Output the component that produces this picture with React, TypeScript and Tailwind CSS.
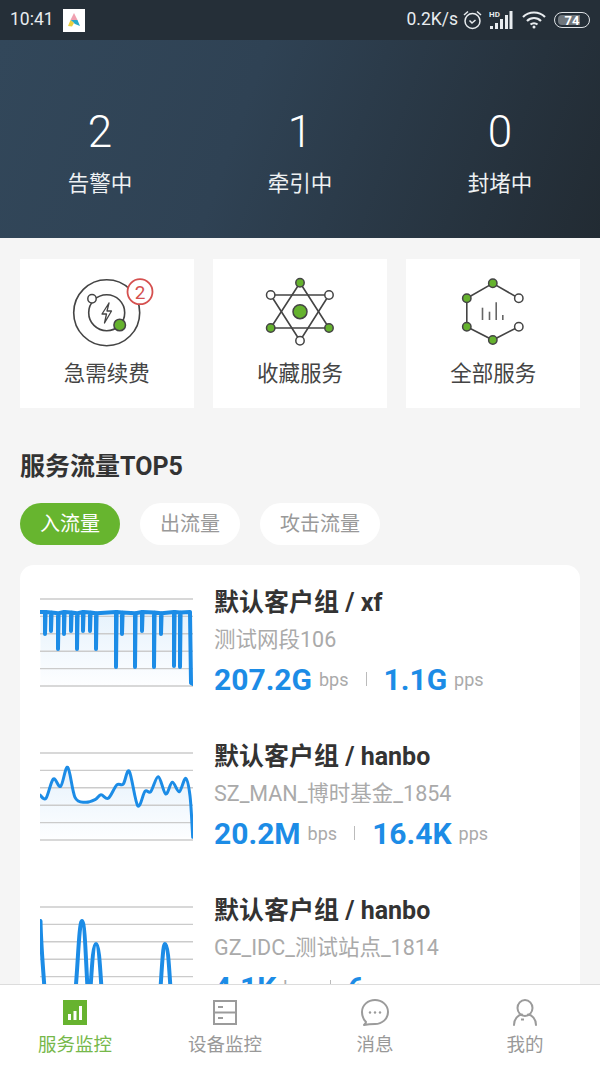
import React from 'react';

const FONT = 'font-[Roboto,"Noto_Sans_CJK_SC",sans-serif]';

type Pt = [number, number];

// catmull-rom through the sampled points of the traffic curve
function smooth(pts: Pt[]) {
  let d = `M${pts[0][0]} ${pts[0][1]}`;
  for (let i = 0; i < pts.length - 1; i++) {
    const p0 = pts[Math.max(i - 1, 0)];
    const p1 = pts[i];
    const p2 = pts[i + 1];
    const p3 = pts[Math.min(i + 2, pts.length - 1)];
    const c1x = p1[0] + (p2[0] - p0[0]) / 6;
    const c1y = p1[1] + (p2[1] - p0[1]) / 6;
    const c2x = p2[0] - (p3[0] - p1[0]) / 6;
    const c2y = p2[1] - (p3[1] - p1[1]) / 6;
    d += ` C${c1x.toFixed(1)} ${c1y.toFixed(1)} ${c2x.toFixed(1)} ${c2y.toFixed(1)} ${p2[0]} ${p2[1]}`;
  }
  return d;
}

const dips: Pt[] = [
  [5, 36], [11, 33], [18, 51], [24, 36], [31, 33], [37, 51], [43, 33], [50, 33], [56, 51], [76, 69],
  [82, 36], [95, 69], [102, 33], [114, 69], [121, 36], [134, 68], [140, 69],
];

function firstLine() {
  let d = 'M0.5 14';
  dips.forEach(([x, y], i) => {
    const top = 14 + (i % 3) * 0.6;
    d += ` L${x} ${top} L${x} ${y} L${x + 0.6} ${top}`;
  });
  return d + ' L150 14 L151 85 L153 86';
}

const secondPts: Pt[] = (
  [
    [60, 198], [78, 208], [100, 150], [122, 172], [143, 115], [165, 205], [195, 220], [225, 212], [243, 197],
    [265, 208], [290, 168], [310, 165], [328, 127], [353, 230], [375, 187], [392, 188], [415, 143], [437, 195],
    [457, 160], [478, 188], [497, 148], [510, 200], [518, 325],
  ] as Pt[]
).map(([x, y]) => [+(x / 3 - 20).toFixed(1), +(y / 3 - 23).toFixed(1)] as Pt);

const thirdLine =
  'M0.5 15 C1 40 3 60 5 90 L35 90 C38 60 39 15 42 15 C45 15 46 60 48 90 L50 90 C52 60 53 38 56 38 C59 38 60 60 62 90 L120 90 C122 60 123 38 125 38 C128 38 129 60 131 90';

const charts = [
  { line: firstLine(), area: firstLine() + ' L153 87 L0.5 87 Z', width: 4 },
  { line: smooth(secondPts), area: smooth(secondPts) + ' L0 87 Z', width: 3 },
  { line: thirdLine, area: '', width: 4 },
];

function Chart({ index }: { index: number }) {
  const c = charts[index];
  return (
    <svg width="153" height="90" viewBox="0 0 153 90" className="shrink-0">
      <defs>
        <linearGradient id={`fade${index}`} x1="0" y1="0" x2="0" y2="1">
          <stop offset="0" stopColor="#e6f2fc" />
          <stop offset="1" stopColor="#fdfeff" />
        </linearGradient>
      </defs>
      {c.area ? <path d={c.area} fill={`url(#fade${index})`} /> : null}
      {[1, 18.4, 35.8, 53.2, 70.6, 88].map((y) => (
        <line key={y} x1="0" x2="153" y1={y} y2={y} stroke="#cbcbcb" strokeWidth="1.4" />
      ))}
      <path d={c.line} fill="none" stroke="#1c8ce6" strokeWidth={c.width} strokeLinejoin="round" strokeLinecap="round" />
    </svg>
  );
}

const rows = [
  { title: '默认客户组 / xf', sub: '测试网段106', a: '207.2G', b: '1.1G' },
  { title: '默认客户组 / hanbo', sub: 'SZ_MAN_博时基金_1854', a: '20.2M', b: '16.4K' },
  { title: '默认客户组 / hanbo', sub: 'GZ_IDC_测试站点_1814', a: '4.1K', b: '6' },
];

function Node({ x, y, on, r }: { x: number; y: number; on?: boolean; r?: number }) {
  return <circle cx={x} cy={y} r={r ?? 4.2} fill={on ? '#65b22e' : '#fff'} stroke="#444" strokeWidth="1.5" />;
}

function RenewIcon() {
  return (
    <svg width="100" height="80" viewBox="-3 0 100 80">
      <g fill="none" stroke="#444" strokeWidth="1.6">
        <circle cx="46.7" cy="42.7" r="33" />
        <circle cx="46.7" cy="42.7" r="18" />
      </g>
      <Node x={32} y={28.7} />
      <Node x={59.7} y={55} r={5.8} on />
      <path d="M49 33 L42 44 L46.5 44 L44.5 53 L51.5 41 L47 41 Z" fill="none" stroke="#444" strokeWidth="1.3" strokeLinejoin="round" />
      <circle cx="80" cy="21.7" r="12.5" fill="#fff" stroke="#d5504f" strokeWidth="1.8" />
      <text x="80" y="28.5" textAnchor="middle" fontSize="19" fill="#d5504f" fontFamily="Roboto">2</text>
    </svg>
  );
}

function FavIcon() {
  return (
    <svg width="100" height="80" viewBox="-5 0 100 80">
      <g fill="none" stroke="#444" strokeWidth="1.6">
        <path d="M45 12.7 L74 58 L15.7 58 Z" />
        <path d="M45 70.7 L15.7 25 L74 25 Z" />
      </g>
      <Node x={45} y={12.7} on />
      <Node x={15.7} y={25} />
      <Node x={74} y={25} />
      <Node x={15.7} y={58} on />
      <Node x={74} y={58} on />
      <Node x={45} y={70.7} />
      <Node x={45} y={41.7} r={7} on />
    </svg>
  );
}

function AllIcon() {
  return (
    <svg width="100" height="80" viewBox="-6.5 0 100 80">
      <path d="M69.3 28.3 L43.3 13.3 L17.3 28.3 L17.3 56.7 L43.3 70 L69.3 56.7" fill="none" stroke="#444" strokeWidth="1.6" />
      <g stroke="#666" strokeWidth="1.6">
        <line x1="33" x2="33" y1="37.7" y2="50" />
        <line x1="40" x2="40" y1="41.7" y2="50" />
        <line x1="46.7" x2="46.7" y1="32.3" y2="50" />
        <line x1="53.3" x2="53.3" y1="45" y2="50" />
      </g>
      <Node x={43.3} y={13.3} on />
      <Node x={17.3} y={28.3} on />
      <Node x={69.3} y={28.3} />
      <Node x={17.3} y={56.7} on />
      <Node x={69.3} y={56.7} />
      <Node x={43.3} y={70} on />
    </svg>
  );
}

function StatusIcons() {
  return (
    <div className="flex items-center text-[#e8ecef]">
      <span className="text-[17.5px] leading-none">0.2K/s</span>
      <svg width="21" height="22" viewBox="0 0 21 22" className="ml-[4px]" fill="none" stroke="currentColor" strokeWidth="1.5">
        <circle cx="10.5" cy="12" r="7.5" />
        <path d="M7.5 11.5 L10 14 L13.5 11" />
        <path d="M2 6 L6 2.5 M19 6 L15 2.5" />
      </svg>
      <svg width="24" height="20" viewBox="0 0 24 20" className="ml-[6px]" fill="currentColor">
        <text x="0" y="7" fontSize="8" fontWeight="700" fontFamily="Roboto">HD</text>
        <rect x="1" y="16" width="3" height="3" />
        <rect x="6" y="13" width="3" height="6" />
        <rect x="11" y="9" width="3" height="10" />
        <rect x="16" y="5" width="3" height="14" />
        <rect x="20.5" y="1" width="3" height="18" />
      </svg>
      <svg width="24" height="20" viewBox="0 0 24 20" className="ml-[9px]" fill="none" stroke="currentColor" strokeWidth="2.2">
        <path d="M1 7 C7 1 17 1 23 7" />
        <path d="M5 11 C9 7 15 7 19 11" />
        <path d="M8.5 14.5 C10.5 12.8 13.5 12.8 15.5 14.5" />
        <circle cx="12" cy="17" r="1.5" fill="currentColor" stroke="none" />
      </svg>
      <div className="relative ml-[8px] flex h-[16px] w-[36px] items-center justify-center rounded-full border border-[#dfe3e6]">
        <div className="absolute left-[3px] top-[2px] h-[10px] w-[22px] rounded-l-[4px] bg-[#6f767c]" />
        <span className="relative text-[13px] font-bold leading-none text-white">74</span>
      </div>
    </div>
  );
}

function NavIcon({ index }: { index: number }) {
  if (index === 0) {
    return (
      <svg width="28" height="30" viewBox="0 0 28 30">
        <rect x="2" y="2" width="24" height="25" fill="#67b32f" />
        <g fill="#fff">
          <rect x="7" y="16" width="3" height="6" />
          <rect x="12.5" y="13" width="3" height="9" />
          <rect x="18" y="8" width="3" height="14" />
        </g>
      </svg>
    );
  }
  if (index === 1) {
    return (
      <svg width="28" height="30" viewBox="0 0 28 30" fill="none" stroke="#9b9b9b" strokeWidth="2">
        <rect x="3" y="3" width="22" height="23" />
        <line x1="3" x2="25" y1="14.5" y2="14.5" />
        <line x1="7" x2="12" y1="9" y2="9" />
        <line x1="7" x2="12" y1="20" y2="20" />
      </svg>
    );
  }
  if (index === 2) {
    return (
      <svg width="28" height="30" viewBox="0 0 28 30" fill="none" stroke="#9b9b9b" strokeWidth="2">
        <path d="M5 24 C2 21 1 18 1 14 C1 7 7 2 14 2 C21 2 27 7 27 14 C27 21 21 26 14 26 C11 26 8 26 3 27 C4 26 5 25 5 24 Z" strokeLinejoin="round" />
        <g fill="#9b9b9b" stroke="none">
          <circle cx="9" cy="14.5" r="1.2" />
          <circle cx="14" cy="14.5" r="1.2" />
          <circle cx="19" cy="14.5" r="1.2" />
        </g>
      </svg>
    );
  }
  return (
    <svg width="28" height="30" viewBox="0 0 28 30" fill="none" stroke="#9b9b9b" strokeWidth="2">
      <ellipse cx="14" cy="10" rx="7.5" ry="8" />
      <path d="M3 27 C3 21 7 17 11 16.5 M25 27 C25 21 21 17 17 16.5" strokeLinecap="round" />
      <line x1="10" x2="13" y1="21.5" y2="21.5" />
    </svg>
  );
}

const nav = ['服务监控', '设备监控', '消息', '我的'];

export default function App() {
  return (
    <div className={`${FONT} flex h-[1067px] w-[600px] flex-col overflow-hidden bg-[#f5f5f5]`}>
      <div className="flex h-[40px] shrink-0 items-center justify-between bg-[#252f38] pl-[10px] pr-[10px] text-[#e8ecef]">
        <div className="flex items-center">
          <span className="text-[17.5px] leading-none">10:41</span>
          <div className="ml-[9px] flex h-[23px] w-[22px] items-center justify-center bg-white">
            <svg width="14" height="16" viewBox="0 0 14 16">
              <path d="M7 1 L10.5 8 L3.5 8 Z" fill="#f0a0b0" />
              <path d="M3.5 8 L10.5 8 L13 14 L8 12 Z" fill="#27a9c9" />
              <path d="M3.5 8 L1 14 L5 14.5 L7 11 Z" fill="#e9cf3e" />
            </svg>
          </div>
        </div>
        <StatusIcons />
      </div>

      <div className="flex h-[198px] shrink-0 bg-[linear-gradient(110deg,#32475a_0%,#2f4254_40%,#222b33_100%)] text-white">
        {[
          ['2', '告警中'],
          ['1', '牵引中'],
          ['0', '封堵中'],
        ].map(([n, label]) => (
          <div key={label} className="flex flex-1 flex-col items-center pt-[64px]">
            <span className="h-[56px] text-[44px] font-light leading-[56px]">{n}</span>
            <span className="mt-[9px] text-[21.5px] leading-[30px] text-[#eef1f3]">{label}</span>
          </div>
        ))}
      </div>

      <div className="relative min-h-0 flex-1 overflow-hidden">
        <div className="grid grid-cols-3 gap-[19.5px] px-[20px] pt-[21px]">
          {[
            { label: '急需续费', icon: <RenewIcon /> },
            { label: '收藏服务', icon: <FavIcon /> },
            { label: '全部服务', icon: <AllIcon /> },
          ].map((card) => (
            <div key={card.label} className="flex h-[149px] flex-col items-center bg-white pt-[11px]">
              {card.icon}
              <span className="mt-[9px] text-[21.5px] leading-[30px] text-[#444]">{card.label}</span>
            </div>
          ))}
        </div>

        <h2 className="mt-[43px] pl-[20px] text-[25px] font-bold leading-[32px] text-[#333]">服务流量TOP5</h2>

        <div className="mt-[20px] flex gap-[20px] pl-[20px]">
          <span className="flex h-[42px] w-[100px] items-center justify-center rounded-full bg-[#67b52f] text-[20px] text-white">入流量</span>
          <span className="flex h-[42px] w-[100px] items-center justify-center rounded-full bg-white text-[20px] text-[#999]">出流量</span>
          <span className="flex h-[42px] w-[120px] items-center justify-center rounded-full bg-white text-[20px] text-[#999]">攻击流量</span>
        </div>

        <div className="mx-[20px] mt-[20px] rounded-t-[14px] bg-white px-[20px] pt-[20px]">
          {rows.map((row, i) => (
            <div key={i} className="flex h-[154px] gap-[21px]">
              <div className="mt-[13px]">
                <Chart index={i} />
              </div>
              <div className="min-w-0">
                <div className="h-[37px] whitespace-nowrap text-[25px] font-bold leading-[36px] text-[#333]">{row.title}</div>
                <div className="h-[35px] whitespace-nowrap text-[21.5px] leading-[35px] text-[#aaa]">{row.sub}</div>
                <div className="flex h-[44px] items-center whitespace-nowrap">
                  <span className="text-[30px] font-bold text-[#1c8ce6]">{row.a}</span>
                  <span className="ml-[7px] text-[18px] text-[#aaa]">bps</span>
                  <span className="mx-[17px] h-[14px] w-[1px] bg-[#bbb]" />
                  <span className="text-[30px] font-bold text-[#1c8ce6]">{row.b}</span>
                  <span className="ml-[7px] text-[18px] text-[#aaa]">pps</span>
                </div>
              </div>
            </div>
          ))}
        </div>
      </div>

      <div className="flex h-[83px] shrink-0 border-t border-[#dcdcdc] bg-white">
        {nav.map((label, i) => (
          <div key={label} className="flex flex-1 flex-col items-center pt-[13px]">
            <NavIcon index={i} />
            <span className={i === 0 ? 'mt-[2px] text-[18.5px] leading-[30px] text-[#76b84a]' : 'mt-[2px] text-[18.5px] leading-[30px] text-[#999]'}>{label}</span>
          </div>
        ))}
      </div>
    </div>
  );
}
